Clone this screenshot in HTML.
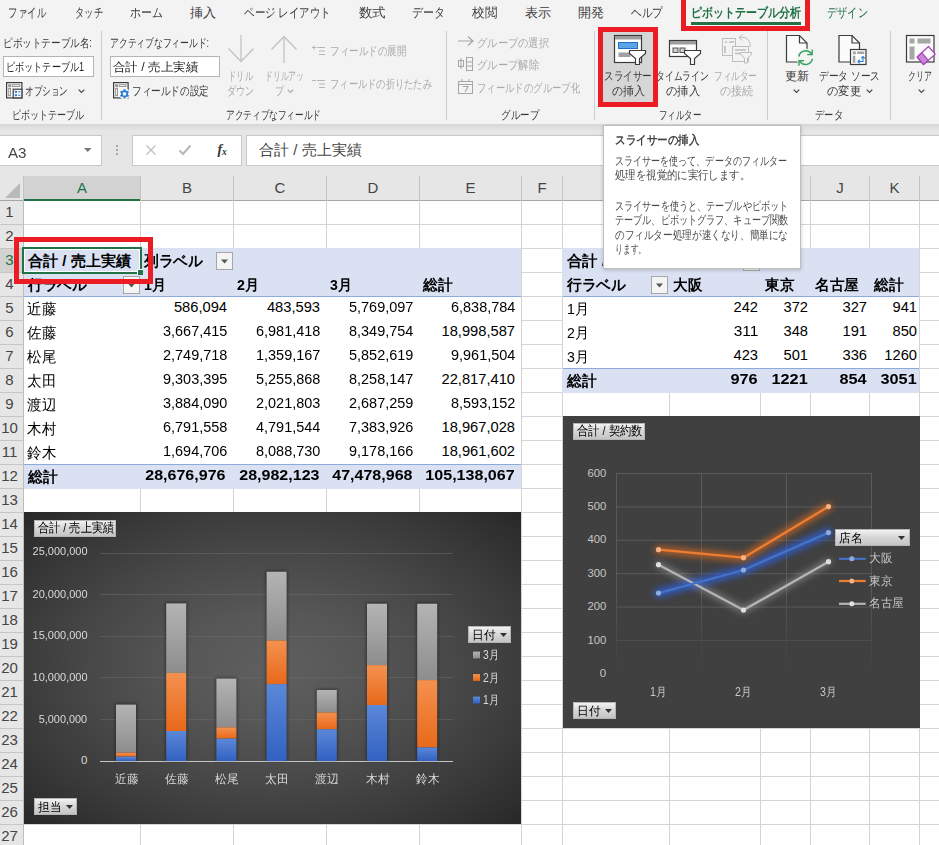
<!DOCTYPE html>
<html lang="ja"><head><meta charset="utf-8"><title>Excel</title>
<style>
html,body{margin:0;padding:0}
body{width:939px;height:845px;overflow:hidden;position:relative;background:#fff;font-family:"Liberation Sans",sans-serif;}
span,div,svg{box-sizing:border-box}
</style></head><body>
<div style="position:absolute;left:0px;top:176px;width:939px;height:669px;background:#fff;"></div>
<svg style="position:absolute;left:0px;top:0px;" width="939" height="845" viewBox="0 0 939 845"><rect x="140" y="200" width="1" height="645" fill="#d4d4d4"/><rect x="233" y="200" width="1" height="645" fill="#d4d4d4"/><rect x="326" y="200" width="1" height="645" fill="#d4d4d4"/><rect x="419" y="200" width="1" height="645" fill="#d4d4d4"/><rect x="521" y="200" width="1" height="645" fill="#d4d4d4"/><rect x="562" y="200" width="1" height="645" fill="#d4d4d4"/><rect x="669" y="200" width="1" height="645" fill="#d4d4d4"/><rect x="760" y="200" width="1" height="645" fill="#d4d4d4"/><rect x="810" y="200" width="1" height="645" fill="#d4d4d4"/><rect x="869" y="200" width="1" height="645" fill="#d4d4d4"/><rect x="919" y="200" width="1" height="645" fill="#d4d4d4"/><rect x="23" y="224" width="916" height="1" fill="#d4d4d4"/><rect x="23" y="248" width="916" height="1" fill="#d4d4d4"/><rect x="23" y="272" width="916" height="1" fill="#d4d4d4"/><rect x="23" y="296" width="916" height="1" fill="#d4d4d4"/><rect x="23" y="320" width="916" height="1" fill="#d4d4d4"/><rect x="23" y="344" width="916" height="1" fill="#d4d4d4"/><rect x="23" y="368" width="916" height="1" fill="#d4d4d4"/><rect x="23" y="392" width="916" height="1" fill="#d4d4d4"/><rect x="23" y="416" width="916" height="1" fill="#d4d4d4"/><rect x="23" y="440" width="916" height="1" fill="#d4d4d4"/><rect x="23" y="464" width="916" height="1" fill="#d4d4d4"/><rect x="23" y="488" width="916" height="1" fill="#d4d4d4"/><rect x="23" y="512" width="916" height="1" fill="#d4d4d4"/><rect x="23" y="536" width="916" height="1" fill="#d4d4d4"/><rect x="23" y="560" width="916" height="1" fill="#d4d4d4"/><rect x="23" y="584" width="916" height="1" fill="#d4d4d4"/><rect x="23" y="608" width="916" height="1" fill="#d4d4d4"/><rect x="23" y="632" width="916" height="1" fill="#d4d4d4"/><rect x="23" y="656" width="916" height="1" fill="#d4d4d4"/><rect x="23" y="680" width="916" height="1" fill="#d4d4d4"/><rect x="23" y="704" width="916" height="1" fill="#d4d4d4"/><rect x="23" y="728" width="916" height="1" fill="#d4d4d4"/><rect x="23" y="752" width="916" height="1" fill="#d4d4d4"/><rect x="23" y="776" width="916" height="1" fill="#d4d4d4"/><rect x="23" y="800" width="916" height="1" fill="#d4d4d4"/><rect x="23" y="824" width="916" height="1" fill="#d4d4d4"/><rect x="23" y="848" width="916" height="1" fill="#d4d4d4"/></svg>
<div style="position:absolute;left:24px;top:248px;width:497px;height:48px;background:#d9e1f2;"></div>
<div style="position:absolute;left:24px;top:296px;width:497px;height:1px;background:#8ea9db;"></div>
<div style="position:absolute;left:24px;top:464px;width:497px;height:25px;background:#d9e1f2;"></div>
<div style="position:absolute;left:24px;top:464px;width:497px;height:1px;background:#8ea9db;"></div>
<div style="position:absolute;left:24px;top:297px;width:497px;height:167px;background:#fff;"></div>
<div style="position:absolute;left:563px;top:297px;width:356px;height:71px;background:#fff;"></div>
<div style="position:absolute;left:562px;top:248px;width:357px;height:48px;background:#d9e1f2;"></div>
<div style="position:absolute;left:563px;top:296px;width:356px;height:1px;background:#8ea9db;"></div>
<div style="position:absolute;left:562px;top:368px;width:357px;height:25px;background:#d9e1f2;"></div>
<div style="position:absolute;left:563px;top:368px;width:356px;height:1px;background:#8ea9db;"></div>
<div style="position:absolute;left:0px;top:176px;width:939px;height:25px;background:#e6e6e6;"></div>
<div style="position:absolute;left:0px;top:200px;width:939px;height:1px;background:#a6a6a6;"></div>
<div style="position:absolute;left:23px;top:176px;width:117px;height:25px;background:#d2d2d2;"></div>
<div style="position:absolute;left:23px;top:199px;width:118px;height:2px;background:#217346;"></div>
<div style="position:absolute;left:23px;top:176px;width:1px;height:25px;background:#c3c3c3;"></div>
<span id="t1" style="position:absolute;white-space:nowrap;line-height:19px;height:19px;font-size:15px;color:#217346;top:177.5px;left:72.0px;transform-origin:0 50%;width:20px;text-align:center;">A</span>
<div style="position:absolute;left:140px;top:176px;width:1px;height:25px;background:#c3c3c3;"></div>
<span id="t2" style="position:absolute;white-space:nowrap;line-height:19px;height:19px;font-size:15px;color:#444;top:177.5px;left:177.0px;transform-origin:0 50%;width:20px;text-align:center;">B</span>
<div style="position:absolute;left:233px;top:176px;width:1px;height:25px;background:#c3c3c3;"></div>
<span id="t3" style="position:absolute;white-space:nowrap;line-height:19px;height:19px;font-size:15px;color:#444;top:177.5px;left:270.0px;transform-origin:0 50%;width:20px;text-align:center;">C</span>
<div style="position:absolute;left:326px;top:176px;width:1px;height:25px;background:#c3c3c3;"></div>
<span id="t4" style="position:absolute;white-space:nowrap;line-height:19px;height:19px;font-size:15px;color:#444;top:177.5px;left:363.0px;transform-origin:0 50%;width:20px;text-align:center;">D</span>
<div style="position:absolute;left:419px;top:176px;width:1px;height:25px;background:#c3c3c3;"></div>
<span id="t5" style="position:absolute;white-space:nowrap;line-height:19px;height:19px;font-size:15px;color:#444;top:177.5px;left:460.5px;transform-origin:0 50%;width:20px;text-align:center;">E</span>
<div style="position:absolute;left:521px;top:176px;width:1px;height:25px;background:#c3c3c3;"></div>
<span id="t6" style="position:absolute;white-space:nowrap;line-height:19px;height:19px;font-size:15px;color:#444;top:177.5px;left:532.0px;transform-origin:0 50%;width:20px;text-align:center;">F</span>
<div style="position:absolute;left:562px;top:176px;width:1px;height:25px;background:#c3c3c3;"></div>
<span id="t7" style="position:absolute;white-space:nowrap;line-height:19px;height:19px;font-size:15px;color:#444;top:177.5px;left:606.0px;transform-origin:0 50%;width:20px;text-align:center;">G</span>
<div style="position:absolute;left:669px;top:176px;width:1px;height:25px;background:#c3c3c3;"></div>
<span id="t8" style="position:absolute;white-space:nowrap;line-height:19px;height:19px;font-size:15px;color:#444;top:177.5px;left:705.0px;transform-origin:0 50%;width:20px;text-align:center;">H</span>
<div style="position:absolute;left:760px;top:176px;width:1px;height:25px;background:#c3c3c3;"></div>
<span id="t9" style="position:absolute;white-space:nowrap;line-height:19px;height:19px;font-size:15px;color:#444;top:177.5px;left:775.5px;transform-origin:0 50%;width:20px;text-align:center;">I</span>
<div style="position:absolute;left:810px;top:176px;width:1px;height:25px;background:#c3c3c3;"></div>
<span id="t10" style="position:absolute;white-space:nowrap;line-height:19px;height:19px;font-size:15px;color:#444;top:177.5px;left:830.0px;transform-origin:0 50%;width:20px;text-align:center;">J</span>
<div style="position:absolute;left:869px;top:176px;width:1px;height:25px;background:#c3c3c3;"></div>
<span id="t11" style="position:absolute;white-space:nowrap;line-height:19px;height:19px;font-size:15px;color:#444;top:177.5px;left:884.5px;transform-origin:0 50%;width:20px;text-align:center;">K</span>
<div style="position:absolute;left:919px;top:176px;width:1px;height:25px;background:#c3c3c3;"></div>
<svg style="position:absolute;left:4px;top:183px;" width="17" height="16" viewBox="0 0 17 16"><path d="M16 0 V15 H1 Z" fill="#b9b9b9"/></svg>
<div style="position:absolute;left:0px;top:201px;width:23px;height:644px;background:#e6e6e6;"></div>
<div style="position:absolute;left:23px;top:201px;width:1px;height:644px;background:#bdbdbd;"></div>
<div style="position:absolute;left:0px;top:248px;width:23px;height:24px;background:#d2d2d2;"></div>
<div style="position:absolute;left:22px;top:248px;width:2px;height:25px;background:#217346;"></div>
<div style="position:absolute;left:0px;top:224px;width:23px;height:1px;background:#c6c6c6;"></div>
<span id="t12" style="position:absolute;white-space:nowrap;line-height:19px;height:19px;font-size:15px;color:#444;top:202.0px;left:0px;transform-origin:0 50%;width:19px;text-align:center;">1</span>
<div style="position:absolute;left:0px;top:248px;width:23px;height:1px;background:#c6c6c6;"></div>
<span id="t13" style="position:absolute;white-space:nowrap;line-height:19px;height:19px;font-size:15px;color:#444;top:226.0px;left:0px;transform-origin:0 50%;width:19px;text-align:center;">2</span>
<div style="position:absolute;left:0px;top:272px;width:23px;height:1px;background:#c6c6c6;"></div>
<span id="t14" style="position:absolute;white-space:nowrap;line-height:19px;height:19px;font-size:15px;color:#217346;top:250.0px;left:0px;transform-origin:0 50%;width:19px;text-align:center;">3</span>
<div style="position:absolute;left:0px;top:296px;width:23px;height:1px;background:#c6c6c6;"></div>
<span id="t15" style="position:absolute;white-space:nowrap;line-height:19px;height:19px;font-size:15px;color:#444;top:274.0px;left:0px;transform-origin:0 50%;width:19px;text-align:center;">4</span>
<div style="position:absolute;left:0px;top:320px;width:23px;height:1px;background:#c6c6c6;"></div>
<span id="t16" style="position:absolute;white-space:nowrap;line-height:19px;height:19px;font-size:15px;color:#444;top:298.0px;left:0px;transform-origin:0 50%;width:19px;text-align:center;">5</span>
<div style="position:absolute;left:0px;top:344px;width:23px;height:1px;background:#c6c6c6;"></div>
<span id="t17" style="position:absolute;white-space:nowrap;line-height:19px;height:19px;font-size:15px;color:#444;top:322.0px;left:0px;transform-origin:0 50%;width:19px;text-align:center;">6</span>
<div style="position:absolute;left:0px;top:368px;width:23px;height:1px;background:#c6c6c6;"></div>
<span id="t18" style="position:absolute;white-space:nowrap;line-height:19px;height:19px;font-size:15px;color:#444;top:346.0px;left:0px;transform-origin:0 50%;width:19px;text-align:center;">7</span>
<div style="position:absolute;left:0px;top:392px;width:23px;height:1px;background:#c6c6c6;"></div>
<span id="t19" style="position:absolute;white-space:nowrap;line-height:19px;height:19px;font-size:15px;color:#444;top:370.0px;left:0px;transform-origin:0 50%;width:19px;text-align:center;">8</span>
<div style="position:absolute;left:0px;top:416px;width:23px;height:1px;background:#c6c6c6;"></div>
<span id="t20" style="position:absolute;white-space:nowrap;line-height:19px;height:19px;font-size:15px;color:#444;top:394.0px;left:0px;transform-origin:0 50%;width:19px;text-align:center;">9</span>
<div style="position:absolute;left:0px;top:440px;width:23px;height:1px;background:#c6c6c6;"></div>
<span id="t21" style="position:absolute;white-space:nowrap;line-height:19px;height:19px;font-size:15px;color:#444;top:418.0px;left:0px;transform-origin:0 50%;width:19px;text-align:center;">10</span>
<div style="position:absolute;left:0px;top:464px;width:23px;height:1px;background:#c6c6c6;"></div>
<span id="t22" style="position:absolute;white-space:nowrap;line-height:19px;height:19px;font-size:15px;color:#444;top:442.0px;left:0px;transform-origin:0 50%;width:19px;text-align:center;">11</span>
<div style="position:absolute;left:0px;top:488px;width:23px;height:1px;background:#c6c6c6;"></div>
<span id="t23" style="position:absolute;white-space:nowrap;line-height:19px;height:19px;font-size:15px;color:#444;top:466.0px;left:0px;transform-origin:0 50%;width:19px;text-align:center;">12</span>
<div style="position:absolute;left:0px;top:512px;width:23px;height:1px;background:#c6c6c6;"></div>
<span id="t24" style="position:absolute;white-space:nowrap;line-height:19px;height:19px;font-size:15px;color:#444;top:490.0px;left:0px;transform-origin:0 50%;width:19px;text-align:center;">13</span>
<div style="position:absolute;left:0px;top:536px;width:23px;height:1px;background:#c6c6c6;"></div>
<span id="t25" style="position:absolute;white-space:nowrap;line-height:19px;height:19px;font-size:15px;color:#444;top:514.0px;left:0px;transform-origin:0 50%;width:19px;text-align:center;">14</span>
<div style="position:absolute;left:0px;top:560px;width:23px;height:1px;background:#c6c6c6;"></div>
<span id="t26" style="position:absolute;white-space:nowrap;line-height:19px;height:19px;font-size:15px;color:#444;top:538.0px;left:0px;transform-origin:0 50%;width:19px;text-align:center;">15</span>
<div style="position:absolute;left:0px;top:584px;width:23px;height:1px;background:#c6c6c6;"></div>
<span id="t27" style="position:absolute;white-space:nowrap;line-height:19px;height:19px;font-size:15px;color:#444;top:562.0px;left:0px;transform-origin:0 50%;width:19px;text-align:center;">16</span>
<div style="position:absolute;left:0px;top:608px;width:23px;height:1px;background:#c6c6c6;"></div>
<span id="t28" style="position:absolute;white-space:nowrap;line-height:19px;height:19px;font-size:15px;color:#444;top:586.0px;left:0px;transform-origin:0 50%;width:19px;text-align:center;">17</span>
<div style="position:absolute;left:0px;top:632px;width:23px;height:1px;background:#c6c6c6;"></div>
<span id="t29" style="position:absolute;white-space:nowrap;line-height:19px;height:19px;font-size:15px;color:#444;top:610.0px;left:0px;transform-origin:0 50%;width:19px;text-align:center;">18</span>
<div style="position:absolute;left:0px;top:656px;width:23px;height:1px;background:#c6c6c6;"></div>
<span id="t30" style="position:absolute;white-space:nowrap;line-height:19px;height:19px;font-size:15px;color:#444;top:634.0px;left:0px;transform-origin:0 50%;width:19px;text-align:center;">19</span>
<div style="position:absolute;left:0px;top:680px;width:23px;height:1px;background:#c6c6c6;"></div>
<span id="t31" style="position:absolute;white-space:nowrap;line-height:19px;height:19px;font-size:15px;color:#444;top:658.0px;left:0px;transform-origin:0 50%;width:19px;text-align:center;">20</span>
<div style="position:absolute;left:0px;top:704px;width:23px;height:1px;background:#c6c6c6;"></div>
<span id="t32" style="position:absolute;white-space:nowrap;line-height:19px;height:19px;font-size:15px;color:#444;top:682.0px;left:0px;transform-origin:0 50%;width:19px;text-align:center;">21</span>
<div style="position:absolute;left:0px;top:728px;width:23px;height:1px;background:#c6c6c6;"></div>
<span id="t33" style="position:absolute;white-space:nowrap;line-height:19px;height:19px;font-size:15px;color:#444;top:706.0px;left:0px;transform-origin:0 50%;width:19px;text-align:center;">22</span>
<div style="position:absolute;left:0px;top:752px;width:23px;height:1px;background:#c6c6c6;"></div>
<span id="t34" style="position:absolute;white-space:nowrap;line-height:19px;height:19px;font-size:15px;color:#444;top:730.0px;left:0px;transform-origin:0 50%;width:19px;text-align:center;">23</span>
<div style="position:absolute;left:0px;top:776px;width:23px;height:1px;background:#c6c6c6;"></div>
<span id="t35" style="position:absolute;white-space:nowrap;line-height:19px;height:19px;font-size:15px;color:#444;top:754.0px;left:0px;transform-origin:0 50%;width:19px;text-align:center;">24</span>
<div style="position:absolute;left:0px;top:800px;width:23px;height:1px;background:#c6c6c6;"></div>
<span id="t36" style="position:absolute;white-space:nowrap;line-height:19px;height:19px;font-size:15px;color:#444;top:778.0px;left:0px;transform-origin:0 50%;width:19px;text-align:center;">25</span>
<div style="position:absolute;left:0px;top:824px;width:23px;height:1px;background:#c6c6c6;"></div>
<span id="t37" style="position:absolute;white-space:nowrap;line-height:19px;height:19px;font-size:15px;color:#444;top:802.0px;left:0px;transform-origin:0 50%;width:19px;text-align:center;">26</span>
<div style="position:absolute;left:0px;top:848px;width:23px;height:1px;background:#c6c6c6;"></div>
<span id="t38" style="position:absolute;white-space:nowrap;line-height:19px;height:19px;font-size:15px;color:#444;top:826.0px;left:0px;transform-origin:0 50%;width:19px;text-align:center;">27</span>
<svg style="position:absolute;left:743px;top:253px;" width="17" height="18" viewBox="0 0 17 18"><rect x="0.5" y="0.5" width="16" height="17" fill="#f4f4f4" stroke="#a6a6a6"/><path d="M5 7.5 H12 L8.5 11.5 Z" fill="#555"/></svg>
<span id="t39" class="m" style="position:absolute;white-space:nowrap;line-height:19px;height:19px;font-size:15px;color:#000;top:250.5px;font-weight:bold;left:28px;transform-origin:0 50%;">合計 / 売上実績</span>
<span id="t40" class="m" style="position:absolute;white-space:nowrap;line-height:19px;height:19px;font-size:15px;color:#000;top:250.5px;font-weight:bold;left:144px;transform-origin:0 50%;transform:scaleX(0.983);">列ラベル</span>
<svg style="position:absolute;left:216px;top:252px;" width="17" height="18" viewBox="0 0 17 18"><rect x="0.5" y="0.5" width="16" height="17" fill="#f4f4f4" stroke="#a6a6a6"/><path d="M5 7.5 H12 L8.5 11.5 Z" fill="#555"/></svg>
<span id="t41" class="m" style="position:absolute;white-space:nowrap;line-height:19px;height:19px;font-size:15px;color:#000;top:274.5px;font-weight:bold;left:28px;transform-origin:0 50%;transform:scaleX(0.983);">行ラベル</span>
<svg style="position:absolute;left:123px;top:276px;" width="17" height="18" viewBox="0 0 17 18"><rect x="0.5" y="0.5" width="16" height="17" fill="#f4f4f4" stroke="#a6a6a6"/><path d="M5 7.5 H12 L8.5 11.5 Z" fill="#555"/></svg>
<span id="t42" class="m" style="position:absolute;white-space:nowrap;line-height:19px;height:19px;font-size:15px;color:#000;top:274.5px;font-weight:bold;left:144px;transform-origin:0 50%;transform:scaleX(0.942);">1月</span>
<span id="t43" class="m" style="position:absolute;white-space:nowrap;line-height:19px;height:19px;font-size:15px;color:#000;top:274.5px;font-weight:bold;left:237px;transform-origin:0 50%;transform:scaleX(0.942);">2月</span>
<span id="t44" class="m" style="position:absolute;white-space:nowrap;line-height:19px;height:19px;font-size:15px;color:#000;top:274.5px;font-weight:bold;left:330px;transform-origin:0 50%;transform:scaleX(0.942);">3月</span>
<span id="t45" class="m" style="position:absolute;white-space:nowrap;line-height:19px;height:19px;font-size:15px;color:#000;top:274.5px;font-weight:bold;left:423px;transform-origin:0 50%;transform:scaleX(0.983);">総計</span>
<span id="t46" class="m" style="position:absolute;white-space:nowrap;line-height:19px;height:19px;font-size:15px;color:#000;top:298.5px;left:27px;transform-origin:0 50%;transform:scaleX(0.967);">近藤</span>
<span id="t47" class="m" style="position:absolute;white-space:nowrap;line-height:18px;height:18px;font-size:14.7px;color:#000;top:297.6px;right:712px;transform-origin:100% 50%;">586,094</span>
<span id="t48" class="m" style="position:absolute;white-space:nowrap;line-height:18px;height:18px;font-size:14.7px;color:#000;top:297.6px;right:619px;transform-origin:100% 50%;">483,593</span>
<span id="t49" class="m" style="position:absolute;white-space:nowrap;line-height:18px;height:18px;font-size:14.7px;color:#000;top:297.6px;right:526px;transform-origin:100% 50%;transform:scaleX(0.985);">5,769,097</span>
<span id="t50" class="m" style="position:absolute;white-space:nowrap;line-height:18px;height:18px;font-size:14.7px;color:#000;top:297.6px;right:424px;transform-origin:100% 50%;transform:scaleX(0.985);">6,838,784</span>
<span id="t51" class="m" style="position:absolute;white-space:nowrap;line-height:19px;height:19px;font-size:15px;color:#000;top:322.5px;left:27px;transform-origin:0 50%;transform:scaleX(0.967);">佐藤</span>
<span id="t52" class="m" style="position:absolute;white-space:nowrap;line-height:18px;height:18px;font-size:14.7px;color:#000;top:321.6px;right:712px;transform-origin:100% 50%;transform:scaleX(0.985);">3,667,415</span>
<span id="t53" class="m" style="position:absolute;white-space:nowrap;line-height:18px;height:18px;font-size:14.7px;color:#000;top:321.6px;right:619px;transform-origin:100% 50%;transform:scaleX(0.985);">6,981,418</span>
<span id="t54" class="m" style="position:absolute;white-space:nowrap;line-height:18px;height:18px;font-size:14.7px;color:#000;top:321.6px;right:526px;transform-origin:100% 50%;transform:scaleX(0.985);">8,349,754</span>
<span id="t55" class="m" style="position:absolute;white-space:nowrap;line-height:18px;height:18px;font-size:14.7px;color:#000;top:321.6px;right:424px;transform-origin:100% 50%;">18,998,587</span>
<span id="t56" class="m" style="position:absolute;white-space:nowrap;line-height:19px;height:19px;font-size:15px;color:#000;top:346.5px;left:27px;transform-origin:0 50%;transform:scaleX(0.967);">松尾</span>
<span id="t57" class="m" style="position:absolute;white-space:nowrap;line-height:18px;height:18px;font-size:14.7px;color:#000;top:345.6px;right:712px;transform-origin:100% 50%;transform:scaleX(0.985);">2,749,718</span>
<span id="t58" class="m" style="position:absolute;white-space:nowrap;line-height:18px;height:18px;font-size:14.7px;color:#000;top:345.6px;right:619px;transform-origin:100% 50%;transform:scaleX(0.985);">1,359,167</span>
<span id="t59" class="m" style="position:absolute;white-space:nowrap;line-height:18px;height:18px;font-size:14.7px;color:#000;top:345.6px;right:526px;transform-origin:100% 50%;transform:scaleX(0.985);">5,852,619</span>
<span id="t60" class="m" style="position:absolute;white-space:nowrap;line-height:18px;height:18px;font-size:14.7px;color:#000;top:345.6px;right:424px;transform-origin:100% 50%;transform:scaleX(0.985);">9,961,504</span>
<span id="t61" class="m" style="position:absolute;white-space:nowrap;line-height:19px;height:19px;font-size:15px;color:#000;top:370.5px;left:27px;transform-origin:0 50%;transform:scaleX(0.967);">太田</span>
<span id="t62" class="m" style="position:absolute;white-space:nowrap;line-height:18px;height:18px;font-size:14.7px;color:#000;top:369.6px;right:712px;transform-origin:100% 50%;transform:scaleX(0.985);">9,303,395</span>
<span id="t63" class="m" style="position:absolute;white-space:nowrap;line-height:18px;height:18px;font-size:14.7px;color:#000;top:369.6px;right:619px;transform-origin:100% 50%;transform:scaleX(0.985);">5,255,868</span>
<span id="t64" class="m" style="position:absolute;white-space:nowrap;line-height:18px;height:18px;font-size:14.7px;color:#000;top:369.6px;right:526px;transform-origin:100% 50%;transform:scaleX(0.985);">8,258,147</span>
<span id="t65" class="m" style="position:absolute;white-space:nowrap;line-height:18px;height:18px;font-size:14.7px;color:#000;top:369.6px;right:424px;transform-origin:100% 50%;">22,817,410</span>
<span id="t66" class="m" style="position:absolute;white-space:nowrap;line-height:19px;height:19px;font-size:15px;color:#000;top:394.5px;left:27px;transform-origin:0 50%;transform:scaleX(0.967);">渡辺</span>
<span id="t67" class="m" style="position:absolute;white-space:nowrap;line-height:18px;height:18px;font-size:14.7px;color:#000;top:393.6px;right:712px;transform-origin:100% 50%;transform:scaleX(0.985);">3,884,090</span>
<span id="t68" class="m" style="position:absolute;white-space:nowrap;line-height:18px;height:18px;font-size:14.7px;color:#000;top:393.6px;right:619px;transform-origin:100% 50%;transform:scaleX(0.985);">2,021,803</span>
<span id="t69" class="m" style="position:absolute;white-space:nowrap;line-height:18px;height:18px;font-size:14.7px;color:#000;top:393.6px;right:526px;transform-origin:100% 50%;transform:scaleX(0.985);">2,687,259</span>
<span id="t70" class="m" style="position:absolute;white-space:nowrap;line-height:18px;height:18px;font-size:14.7px;color:#000;top:393.6px;right:424px;transform-origin:100% 50%;transform:scaleX(0.985);">8,593,152</span>
<span id="t71" class="m" style="position:absolute;white-space:nowrap;line-height:19px;height:19px;font-size:15px;color:#000;top:418.5px;left:27px;transform-origin:0 50%;transform:scaleX(0.967);">木村</span>
<span id="t72" class="m" style="position:absolute;white-space:nowrap;line-height:18px;height:18px;font-size:14.7px;color:#000;top:417.6px;right:712px;transform-origin:100% 50%;transform:scaleX(0.985);">6,791,558</span>
<span id="t73" class="m" style="position:absolute;white-space:nowrap;line-height:18px;height:18px;font-size:14.7px;color:#000;top:417.6px;right:619px;transform-origin:100% 50%;transform:scaleX(0.985);">4,791,544</span>
<span id="t74" class="m" style="position:absolute;white-space:nowrap;line-height:18px;height:18px;font-size:14.7px;color:#000;top:417.6px;right:526px;transform-origin:100% 50%;transform:scaleX(0.985);">7,383,926</span>
<span id="t75" class="m" style="position:absolute;white-space:nowrap;line-height:18px;height:18px;font-size:14.7px;color:#000;top:417.6px;right:424px;transform-origin:100% 50%;">18,967,028</span>
<span id="t76" class="m" style="position:absolute;white-space:nowrap;line-height:19px;height:19px;font-size:15px;color:#000;top:442.5px;left:27px;transform-origin:0 50%;transform:scaleX(0.967);">鈴木</span>
<span id="t77" class="m" style="position:absolute;white-space:nowrap;line-height:18px;height:18px;font-size:14.7px;color:#000;top:441.6px;right:712px;transform-origin:100% 50%;transform:scaleX(0.985);">1,694,706</span>
<span id="t78" class="m" style="position:absolute;white-space:nowrap;line-height:18px;height:18px;font-size:14.7px;color:#000;top:441.6px;right:619px;transform-origin:100% 50%;transform:scaleX(0.985);">8,088,730</span>
<span id="t79" class="m" style="position:absolute;white-space:nowrap;line-height:18px;height:18px;font-size:14.7px;color:#000;top:441.6px;right:526px;transform-origin:100% 50%;transform:scaleX(0.985);">9,178,166</span>
<span id="t80" class="m" style="position:absolute;white-space:nowrap;line-height:18px;height:18px;font-size:14.7px;color:#000;top:441.6px;right:424px;transform-origin:100% 50%;">18,961,602</span>
<span id="t81" class="m" style="position:absolute;white-space:nowrap;line-height:19px;height:19px;font-size:15px;color:#000;top:466.5px;font-weight:bold;left:28px;transform-origin:0 50%;transform:scaleX(0.983);">総計</span>
<span id="t82" class="m" style="position:absolute;white-space:nowrap;line-height:18px;height:18px;font-size:14.7px;color:#000;top:465.6px;font-weight:bold;right:713px;transform-origin:100% 50%;transform:scaleX(1.092);">28,676,976</span>
<span id="t83" class="m" style="position:absolute;white-space:nowrap;line-height:18px;height:18px;font-size:14.7px;color:#000;top:465.6px;font-weight:bold;right:619px;transform-origin:100% 50%;transform:scaleX(1.092);">28,982,123</span>
<span id="t84" class="m" style="position:absolute;white-space:nowrap;line-height:18px;height:18px;font-size:14.7px;color:#000;top:465.6px;font-weight:bold;right:526px;transform-origin:100% 50%;transform:scaleX(1.092);">47,478,968</span>
<span id="t85" class="m" style="position:absolute;white-space:nowrap;line-height:18px;height:18px;font-size:14.7px;color:#000;top:465.6px;font-weight:bold;right:424px;transform-origin:100% 50%;transform:scaleX(1.094);">105,138,067</span>
<span id="t86" class="m" style="position:absolute;white-space:nowrap;line-height:19px;height:19px;font-size:15px;color:#000;top:250.5px;font-weight:bold;left:566.5px;transform-origin:0 50%;transform:scaleX(1.023);">合計 / 契約数</span>
<span id="t87" class="m" style="position:absolute;white-space:nowrap;line-height:19px;height:19px;font-size:15px;color:#000;top:274.5px;font-weight:bold;left:567px;transform-origin:0 50%;transform:scaleX(0.983);">行ラベル</span>
<svg style="position:absolute;left:651px;top:276px;" width="17" height="18" viewBox="0 0 17 18"><rect x="0.5" y="0.5" width="16" height="17" fill="#f4f4f4" stroke="#a6a6a6"/><path d="M5 7.5 H12 L8.5 11.5 Z" fill="#555"/></svg>
<span id="t88" class="m" style="position:absolute;white-space:nowrap;line-height:19px;height:19px;font-size:15px;color:#000;top:274.5px;font-weight:bold;left:673px;transform-origin:0 50%;transform:scaleX(0.967);">大阪</span>
<span id="t89" class="m" style="position:absolute;white-space:nowrap;line-height:19px;height:19px;font-size:15px;color:#000;top:274.5px;font-weight:bold;left:765px;transform-origin:0 50%;transform:scaleX(0.967);">東京</span>
<span id="t90" class="m" style="position:absolute;white-space:nowrap;line-height:19px;height:19px;font-size:15px;color:#000;top:274.5px;font-weight:bold;left:815px;transform-origin:0 50%;transform:scaleX(0.978);">名古屋</span>
<span id="t91" class="m" style="position:absolute;white-space:nowrap;line-height:19px;height:19px;font-size:15px;color:#000;top:274.5px;font-weight:bold;left:874px;transform-origin:0 50%;transform:scaleX(0.983);">総計</span>
<span id="t92" class="m" style="position:absolute;white-space:nowrap;line-height:19px;height:19px;font-size:15px;color:#000;top:298.5px;left:567px;transform-origin:0 50%;transform:scaleX(0.942);">1月</span>
<span id="t93" class="m" style="position:absolute;white-space:nowrap;line-height:18px;height:18px;font-size:14.7px;color:#000;top:297.6px;right:181px;transform-origin:100% 50%;">242</span>
<span id="t94" class="m" style="position:absolute;white-space:nowrap;line-height:18px;height:18px;font-size:14.7px;color:#000;top:297.6px;right:131px;transform-origin:100% 50%;">372</span>
<span id="t95" class="m" style="position:absolute;white-space:nowrap;line-height:18px;height:18px;font-size:14.7px;color:#000;top:297.6px;right:72px;transform-origin:100% 50%;">327</span>
<span id="t96" class="m" style="position:absolute;white-space:nowrap;line-height:18px;height:18px;font-size:14.7px;color:#000;top:297.6px;right:22px;transform-origin:100% 50%;">941</span>
<span id="t97" class="m" style="position:absolute;white-space:nowrap;line-height:19px;height:19px;font-size:15px;color:#000;top:322.5px;left:567px;transform-origin:0 50%;transform:scaleX(0.942);">2月</span>
<span id="t98" class="m" style="position:absolute;white-space:nowrap;line-height:18px;height:18px;font-size:14.7px;color:#000;top:321.6px;right:181px;transform-origin:100% 50%;transform:scaleX(1.057);">311</span>
<span id="t99" class="m" style="position:absolute;white-space:nowrap;line-height:18px;height:18px;font-size:14.7px;color:#000;top:321.6px;right:131px;transform-origin:100% 50%;">348</span>
<span id="t100" class="m" style="position:absolute;white-space:nowrap;line-height:18px;height:18px;font-size:14.7px;color:#000;top:321.6px;right:72px;transform-origin:100% 50%;">191</span>
<span id="t101" class="m" style="position:absolute;white-space:nowrap;line-height:18px;height:18px;font-size:14.7px;color:#000;top:321.6px;right:22px;transform-origin:100% 50%;">850</span>
<span id="t102" class="m" style="position:absolute;white-space:nowrap;line-height:19px;height:19px;font-size:15px;color:#000;top:346.5px;left:567px;transform-origin:0 50%;transform:scaleX(0.942);">3月</span>
<span id="t103" class="m" style="position:absolute;white-space:nowrap;line-height:18px;height:18px;font-size:14.7px;color:#000;top:345.6px;right:181px;transform-origin:100% 50%;">423</span>
<span id="t104" class="m" style="position:absolute;white-space:nowrap;line-height:18px;height:18px;font-size:14.7px;color:#000;top:345.6px;right:131px;transform-origin:100% 50%;">501</span>
<span id="t105" class="m" style="position:absolute;white-space:nowrap;line-height:18px;height:18px;font-size:14.7px;color:#000;top:345.6px;right:72px;transform-origin:100% 50%;">336</span>
<span id="t106" class="m" style="position:absolute;white-space:nowrap;line-height:18px;height:18px;font-size:14.7px;color:#000;top:345.6px;right:22px;transform-origin:100% 50%;">1260</span>
<span id="t107" class="m" style="position:absolute;white-space:nowrap;line-height:19px;height:19px;font-size:15px;color:#000;top:370.5px;font-weight:bold;left:567px;transform-origin:0 50%;transform:scaleX(0.983);">総計</span>
<span id="t108" class="m" style="position:absolute;white-space:nowrap;line-height:18px;height:18px;font-size:14.7px;color:#000;top:369.6px;font-weight:bold;right:181px;transform-origin:100% 50%;transform:scaleX(1.107);">976</span>
<span id="t109" class="m" style="position:absolute;white-space:nowrap;line-height:18px;height:18px;font-size:14.7px;color:#000;top:369.6px;font-weight:bold;right:131px;transform-origin:100% 50%;transform:scaleX(1.107);">1221</span>
<span id="t110" class="m" style="position:absolute;white-space:nowrap;line-height:18px;height:18px;font-size:14.7px;color:#000;top:369.6px;font-weight:bold;right:72px;transform-origin:100% 50%;transform:scaleX(1.107);">854</span>
<span id="t111" class="m" style="position:absolute;white-space:nowrap;line-height:18px;height:18px;font-size:14.7px;color:#000;top:369.6px;font-weight:bold;right:22px;transform-origin:100% 50%;transform:scaleX(1.107);">3051</span>
<div style="position:absolute;left:24px;top:249px;width:116px;height:23px;border:1px solid #fff;"></div>
<div style="position:absolute;left:22px;top:247px;width:120px;height:27px;border:2px solid #217346;"></div>
<div style="position:absolute;left:137px;top:269px;width:6px;height:6px;background:#217346;border:1px solid #fff;border-right:none;border-bottom:none;"></div>
<div style="position:absolute;left:24px;top:512px;width:497px;height:312px;background:radial-gradient(ellipse farthest-corner at 50% 50%,#5f5f5f 0%,#575757 25%,#484848 52%,#3a3a3a 74%,#282828 100%);"></div>
<svg style="position:absolute;left:0px;top:0px;" width="939" height="845" viewBox="0 0 939 845"><rect x="100" y="719" width="353" height="1" fill="#6a6a6a" opacity="0.55"/><rect x="100" y="677" width="353" height="1" fill="#6a6a6a" opacity="0.55"/><rect x="100" y="636" width="353" height="1" fill="#6a6a6a" opacity="0.55"/><rect x="100" y="594" width="353" height="1" fill="#6a6a6a" opacity="0.55"/><rect x="100" y="553" width="353" height="1" fill="#6a6a6a" opacity="0.55"/><rect x="100" y="761" width="353" height="1" fill="#c4c4c4"/><defs>
<linearGradient id="gb" x1="0" y1="0" x2="0" y2="1"><stop offset="0" stop-color="#5c88d8"/><stop offset="1" stop-color="#3161c2"/></linearGradient>
<linearGradient id="go" x1="0" y1="0" x2="0" y2="1"><stop offset="0" stop-color="#f4914f"/><stop offset="1" stop-color="#e8691a"/></linearGradient>
<linearGradient id="gg" x1="0" y1="0" x2="0" y2="1"><stop offset="0" stop-color="#b4b4b4"/><stop offset="1" stop-color="#8d8d8d"/></linearGradient>
</defs><filter id="bs" x="-50%" y="-10%" width="200%" height="120%"><feGaussianBlur stdDeviation="1.6"/></filter><rect x="115.0" y="703.6" width="22" height="56.9" fill="#000" opacity="0.38" filter="url(#bs)"/><rect x="165.2" y="602.4" width="22" height="158.1" fill="#000" opacity="0.38" filter="url(#bs)"/><rect x="215.4" y="677.6" width="22" height="82.9" fill="#000" opacity="0.38" filter="url(#bs)"/><rect x="265.6" y="570.7" width="22" height="189.8" fill="#000" opacity="0.38" filter="url(#bs)"/><rect x="315.8" y="689.0" width="22" height="71.5" fill="#000" opacity="0.38" filter="url(#bs)"/><rect x="366.0" y="602.7" width="22" height="157.8" fill="#000" opacity="0.38" filter="url(#bs)"/><rect x="416.2" y="602.7" width="22" height="157.8" fill="#000" opacity="0.38" filter="url(#bs)"/><rect x="116.0" y="704.6" width="20" height="48.0" fill="url(#gg)"/><rect x="116.0" y="752.6" width="20" height="4.0" fill="url(#go)"/><rect x="116.0" y="756.6" width="20" height="4.4" fill="url(#gb)"/><rect x="166.2" y="603.4" width="20" height="69.5" fill="url(#gg)"/><rect x="166.2" y="672.9" width="20" height="58.1" fill="url(#go)"/><rect x="166.2" y="731.0" width="20" height="30.0" fill="url(#gb)"/><rect x="216.4" y="678.6" width="20" height="48.7" fill="url(#gg)"/><rect x="216.4" y="727.3" width="20" height="11.3" fill="url(#go)"/><rect x="216.4" y="738.6" width="20" height="22.4" fill="url(#gb)"/><rect x="266.6" y="571.7" width="20" height="68.7" fill="url(#gg)"/><rect x="266.6" y="640.4" width="20" height="43.7" fill="url(#go)"/><rect x="266.6" y="684.1" width="20" height="76.9" fill="url(#gb)"/><rect x="316.8" y="690.0" width="20" height="22.4" fill="url(#gg)"/><rect x="316.8" y="712.4" width="20" height="16.8" fill="url(#go)"/><rect x="316.8" y="729.2" width="20" height="31.8" fill="url(#gb)"/><rect x="367.0" y="603.7" width="20" height="61.4" fill="url(#gg)"/><rect x="367.0" y="665.1" width="20" height="39.9" fill="url(#go)"/><rect x="367.0" y="705.0" width="20" height="56.0" fill="url(#gb)"/><rect x="417.2" y="603.7" width="20" height="76.4" fill="url(#gg)"/><rect x="417.2" y="680.1" width="20" height="67.3" fill="url(#go)"/><rect x="417.2" y="747.4" width="20" height="13.6" fill="url(#gb)"/><rect x="473" y="651.6" width="7" height="6.800" fill="url(#gg)"/><rect x="473" y="674.1" width="7" height="6.800" fill="url(#go)"/><rect x="473" y="696.6" width="7" height="6.800" fill="url(#gb)"/></svg>
<span id="t112" class="m" style="position:absolute;white-space:nowrap;line-height:15px;height:15px;font-size:11.5px;color:#d9d9d9;top:752.5px;right:851.5px;transform-origin:100% 50%;">0</span>
<span id="t113" class="m" style="position:absolute;white-space:nowrap;line-height:15px;height:15px;font-size:11.5px;color:#d9d9d9;top:711.5px;right:851.5px;transform-origin:100% 50%;transform:scaleX(0.948);">5,000,000</span>
<span id="t114" class="m" style="position:absolute;white-space:nowrap;line-height:15px;height:15px;font-size:11.5px;color:#d9d9d9;top:670.1px;right:851.5px;transform-origin:100% 50%;transform:scaleX(0.955);">10,000,000</span>
<span id="t115" class="m" style="position:absolute;white-space:nowrap;line-height:15px;height:15px;font-size:11.5px;color:#d9d9d9;top:627.6px;right:851.5px;transform-origin:100% 50%;transform:scaleX(0.955);">15,000,000</span>
<span id="t116" class="m" style="position:absolute;white-space:nowrap;line-height:15px;height:15px;font-size:11.5px;color:#d9d9d9;top:587.1px;right:851.5px;transform-origin:100% 50%;transform:scaleX(0.955);">20,000,000</span>
<span id="t117" class="m" style="position:absolute;white-space:nowrap;line-height:15px;height:15px;font-size:11.5px;color:#d9d9d9;top:544.0px;right:851.5px;transform-origin:100% 50%;transform:scaleX(0.955);">25,000,000</span>
<span id="t118" class="m" style="position:absolute;white-space:nowrap;line-height:16px;height:16px;font-size:12px;color:#d9d9d9;top:771.0px;left:114.5px;transform-origin:0 50%;transform:scaleX(0.979);">近藤</span>
<span id="t119" class="m" style="position:absolute;white-space:nowrap;line-height:16px;height:16px;font-size:12px;color:#d9d9d9;top:771.0px;left:164.7px;transform-origin:0 50%;transform:scaleX(0.979);">佐藤</span>
<span id="t120" class="m" style="position:absolute;white-space:nowrap;line-height:16px;height:16px;font-size:12px;color:#d9d9d9;top:771.0px;left:214.9px;transform-origin:0 50%;transform:scaleX(0.979);">松尾</span>
<span id="t121" class="m" style="position:absolute;white-space:nowrap;line-height:16px;height:16px;font-size:12px;color:#d9d9d9;top:771.0px;left:265.1px;transform-origin:0 50%;transform:scaleX(0.979);">太田</span>
<span id="t122" class="m" style="position:absolute;white-space:nowrap;line-height:16px;height:16px;font-size:12px;color:#d9d9d9;top:771.0px;left:315.3px;transform-origin:0 50%;transform:scaleX(0.979);">渡辺</span>
<span id="t123" class="m" style="position:absolute;white-space:nowrap;line-height:16px;height:16px;font-size:12px;color:#d9d9d9;top:771.0px;left:365.5px;transform-origin:0 50%;transform:scaleX(0.979);">木村</span>
<span id="t124" class="m" style="position:absolute;white-space:nowrap;line-height:16px;height:16px;font-size:12px;color:#d9d9d9;top:771.0px;left:415.70000000000005px;transform-origin:0 50%;transform:scaleX(0.979);">鈴木</span>
<div style="position:absolute;left:34px;top:520px;width:82px;height:17px;background:linear-gradient(#f2f2f2,#d8d8d8 45%,#c4c4c4);border:1px solid #b5b5b5;"></div><span id="t125" class="m" style="position:absolute;white-space:nowrap;line-height:16px;height:16px;font-size:12.5px;color:#000;top:520.2px;left:38px;transform-origin:0 50%;transform:scaleX(0.86);">合計 / 売上実績</span>
<div style="position:absolute;left:467.5px;top:626px;width:43.5px;height:17px;background:linear-gradient(#f2f2f2,#d8d8d8 45%,#c4c4c4);border:1px solid #b5b5b5;"></div><span id="t126" class="m" style="position:absolute;white-space:nowrap;line-height:16px;height:16px;font-size:12px;color:#000;top:626.5px;left:471.5px;transform-origin:0 50%;transform:scaleX(0.979);">日付</span><svg style="position:absolute;left:500.0px;top:632.5px;" width="7" height="4" viewBox="0 0 7 4"><path d="M0 0 H7 L3.5 4 Z" fill="#333"/></svg>
<span id="t127" class="m" style="position:absolute;white-space:nowrap;line-height:16px;height:16px;font-size:12px;color:#d9d9d9;top:646.5px;left:483px;transform-origin:0 50%;transform:scaleX(0.856);">3月</span>
<span id="t128" class="m" style="position:absolute;white-space:nowrap;line-height:16px;height:16px;font-size:12px;color:#d9d9d9;top:669.5px;left:483px;transform-origin:0 50%;transform:scaleX(0.856);">2月</span>
<span id="t129" class="m" style="position:absolute;white-space:nowrap;line-height:16px;height:16px;font-size:12px;color:#d9d9d9;top:692.0px;left:483px;transform-origin:0 50%;transform:scaleX(0.856);">1月</span>
<div style="position:absolute;left:34px;top:798px;width:43px;height:17px;background:linear-gradient(#f2f2f2,#d8d8d8 45%,#c4c4c4);border:1px solid #b5b5b5;"></div><span id="t130" class="m" style="position:absolute;white-space:nowrap;line-height:16px;height:16px;font-size:12px;color:#000;top:798.5px;left:38px;transform-origin:0 50%;transform:scaleX(0.979);">担当</span><svg style="position:absolute;left:66px;top:804.5px;" width="7" height="4" viewBox="0 0 7 4"><path d="M0 0 H7 L3.5 4 Z" fill="#333"/></svg>
<div style="position:absolute;left:563px;top:416px;width:356.5px;height:312px;background:#404040;"></div>
<svg style="position:absolute;left:0px;top:0px;" width="939" height="845" viewBox="0 0 939 845"><rect x="616" y="640.0" width="256" height="1" fill="#4e4e4e"/><rect x="616" y="606.6" width="256" height="1" fill="#5a5a5a"/><rect x="616" y="573.2" width="256" height="1" fill="#5a5a5a"/><rect x="616" y="539.8" width="256" height="1" fill="#5a5a5a"/><rect x="616" y="506.4" width="256" height="1" fill="#5a5a5a"/><rect x="616" y="473.0" width="256" height="1" fill="#5a5a5a"/><defs><linearGradient id="vf" x1="0" y1="0" x2="0" y2="1"><stop offset="0" stop-color="#5a5a5a"/><stop offset="0.6" stop-color="#585858"/><stop offset="1" stop-color="#404040"/></linearGradient></defs><rect x="616.0" y="473" width="1" height="196" fill="url(#vf)"/><rect x="701.0" y="473" width="1" height="196" fill="url(#vf)"/><rect x="786.0" y="473" width="1" height="196" fill="url(#vf)"/><rect x="871.0" y="473" width="1" height="196" fill="url(#vf)"/><defs><filter id="gl" x="-30%" y="-30%" width="160%" height="160%"><feGaussianBlur stdDeviation="3.2"/></filter></defs><polyline points="658.5,564.7 743.5,610.1 828.5,561.7" fill="none" stroke="#d8d8d8" stroke-width="7" stroke-linejoin="round" stroke-linecap="round" opacity="0.33" filter="url(#gl)"/><polyline points="658.5,593.1 743.5,570.0 828.5,532.6" fill="none" stroke="#2f5fd8" stroke-width="9" stroke-linejoin="round" stroke-linecap="round" opacity="0.8" filter="url(#gl)"/><polyline points="658.5,549.7 743.5,557.7 828.5,506.6" fill="none" stroke="#f0701c" stroke-width="8" stroke-linejoin="round" stroke-linecap="round" opacity="0.6" filter="url(#gl)"/><polyline points="658.5,564.7 743.5,610.1 828.5,561.7" fill="none" stroke="#b4b4b4" stroke-width="2.3" stroke-linejoin="round" stroke-linecap="round"/><circle cx="658.5" cy="564.7" r="2.6" fill="#e0e0e0"/><circle cx="743.5" cy="610.1" r="2.6" fill="#e0e0e0"/><circle cx="828.5" cy="561.7" r="2.6" fill="#e0e0e0"/><polyline points="658.5,593.1 743.5,570.0 828.5,532.6" fill="none" stroke="#4472c4" stroke-width="2.3" stroke-linejoin="round" stroke-linecap="round"/><circle cx="658.5" cy="593.1" r="2.6" fill="#8faadc"/><circle cx="743.5" cy="570.0" r="2.6" fill="#8faadc"/><circle cx="828.5" cy="532.6" r="2.6" fill="#8faadc"/><polyline points="658.5,549.7 743.5,557.7 828.5,506.6" fill="none" stroke="#ed7d31" stroke-width="2.3" stroke-linejoin="round" stroke-linecap="round"/><circle cx="658.5" cy="549.7" r="2.6" fill="#f4b183"/><circle cx="743.5" cy="557.7" r="2.6" fill="#f4b183"/><circle cx="828.5" cy="506.6" r="2.6" fill="#f4b183"/><rect x="839" y="557.7" width="26.700" height="2.2" fill="#4472c4"/><circle cx="851.800" cy="558.8" r="2.5" fill="#8faadc"/><rect x="839" y="579.9" width="26.700" height="2.2" fill="#ed7d31"/><circle cx="851.800" cy="581" r="2.5" fill="#f4b183"/><rect x="839" y="602.7" width="26.700" height="2.2" fill="#b4b4b4"/><circle cx="851.800" cy="603.8" r="2.5" fill="#e0e0e0"/></svg>
<span id="t131" class="m" style="position:absolute;white-space:nowrap;line-height:15px;height:15px;font-size:11.3px;color:#c6c6c6;top:666.0px;right:332.70000000000005px;transform-origin:100% 50%;transform:scaleX(1.032);">0</span>
<span id="t132" class="m" style="position:absolute;white-space:nowrap;line-height:15px;height:15px;font-size:11.3px;color:#c6c6c6;top:632.6px;right:332.70000000000005px;transform-origin:100% 50%;">100</span>
<span id="t133" class="m" style="position:absolute;white-space:nowrap;line-height:15px;height:15px;font-size:11.3px;color:#c6c6c6;top:599.2px;right:332.70000000000005px;transform-origin:100% 50%;">200</span>
<span id="t134" class="m" style="position:absolute;white-space:nowrap;line-height:15px;height:15px;font-size:11.3px;color:#c6c6c6;top:565.8px;right:332.70000000000005px;transform-origin:100% 50%;">300</span>
<span id="t135" class="m" style="position:absolute;white-space:nowrap;line-height:15px;height:15px;font-size:11.3px;color:#c6c6c6;top:532.4px;right:332.70000000000005px;transform-origin:100% 50%;">400</span>
<span id="t136" class="m" style="position:absolute;white-space:nowrap;line-height:15px;height:15px;font-size:11.3px;color:#c6c6c6;top:499.1px;right:332.70000000000005px;transform-origin:100% 50%;">500</span>
<span id="t137" class="m" style="position:absolute;white-space:nowrap;line-height:15px;height:15px;font-size:11.3px;color:#c6c6c6;top:465.7px;right:332.70000000000005px;transform-origin:100% 50%;">600</span>
<span id="t138" class="m" style="position:absolute;white-space:nowrap;line-height:16px;height:16px;font-size:12px;color:#c8c8c8;top:684.0px;left:650.2px;transform-origin:0 50%;transform:scaleX(0.883);">1月</span>
<span id="t139" class="m" style="position:absolute;white-space:nowrap;line-height:16px;height:16px;font-size:12px;color:#c8c8c8;top:684.0px;left:735.2px;transform-origin:0 50%;transform:scaleX(0.883);">2月</span>
<span id="t140" class="m" style="position:absolute;white-space:nowrap;line-height:16px;height:16px;font-size:12px;color:#c8c8c8;top:684.0px;left:820.2px;transform-origin:0 50%;transform:scaleX(0.883);">3月</span>
<div style="position:absolute;left:573px;top:423px;width:72px;height:17px;background:linear-gradient(#f2f2f2,#d8d8d8 45%,#c4c4c4);border:1px solid #b5b5b5;"></div><span id="t141" class="m" style="position:absolute;white-space:nowrap;line-height:16px;height:16px;font-size:12.5px;color:#000;top:423.2px;left:577px;transform-origin:0 50%;transform:scaleX(0.868);">合計 / 契約数</span>
<div style="position:absolute;left:835px;top:529px;width:75px;height:17px;background:linear-gradient(#f2f2f2,#d8d8d8 45%,#c4c4c4);border:1px solid #b5b5b5;"></div><span id="t142" class="m" style="position:absolute;white-space:nowrap;line-height:16px;height:16px;font-size:12px;color:#000;top:529.5px;left:839px;transform-origin:0 50%;transform:scaleX(0.979);">店名</span><svg style="position:absolute;left:898px;top:535.5px;" width="7" height="4" viewBox="0 0 7 4"><path d="M0 0 H7 L3.5 4 Z" fill="#333"/></svg>
<span id="t143" class="m" style="position:absolute;white-space:nowrap;line-height:16px;height:16px;font-size:12px;color:#c8c8c8;top:550.0px;left:868.5px;transform-origin:0 50%;transform:scaleX(0.979);">大阪</span>
<span id="t144" class="m" style="position:absolute;white-space:nowrap;line-height:16px;height:16px;font-size:12px;color:#c8c8c8;top:572.5px;left:868.5px;transform-origin:0 50%;transform:scaleX(0.979);">東京</span>
<span id="t145" class="m" style="position:absolute;white-space:nowrap;line-height:16px;height:16px;font-size:12px;color:#c8c8c8;top:595.3px;left:868.5px;transform-origin:0 50%;transform:scaleX(0.972);">名古屋</span>
<div style="position:absolute;left:573px;top:702px;width:43px;height:17px;background:linear-gradient(#f2f2f2,#d8d8d8 45%,#c4c4c4);border:1px solid #b5b5b5;"></div><span id="t146" class="m" style="position:absolute;white-space:nowrap;line-height:16px;height:16px;font-size:12px;color:#000;top:702.5px;left:577px;transform-origin:0 50%;transform:scaleX(0.979);">日付</span><svg style="position:absolute;left:605px;top:708.5px;" width="7" height="4" viewBox="0 0 7 4"><path d="M0 0 H7 L3.5 4 Z" fill="#333"/></svg>
<div style="position:absolute;left:0px;top:123px;width:939px;height:53px;background:#e6e6e6;"></div>
<div style="position:absolute;left:0px;top:124px;width:939px;height:7px;background:linear-gradient(#d6d6d6,#e0e0e0 50%,#e6e6e6);"></div>
<div style="position:absolute;left:0px;top:0px;width:939px;height:124px;background:#f3f3f3;"></div>
<span id="t147" class="m" style="position:absolute;white-space:nowrap;line-height:17px;height:17px;font-size:13px;color:#3c3c3c;top:3.5px;left:8px;transform-origin:0 50%;transform:scaleX(0.731);">ファイル</span>
<span id="t148" class="m" style="position:absolute;white-space:nowrap;line-height:17px;height:17px;font-size:13px;color:#3c3c3c;top:3.5px;left:75px;transform-origin:0 50%;transform:scaleX(0.718);">タッチ</span>
<span id="t149" class="m" style="position:absolute;white-space:nowrap;line-height:17px;height:17px;font-size:13px;color:#3c3c3c;top:3.5px;left:130px;transform-origin:0 50%;transform:scaleX(0.846);">ホーム</span>
<span id="t150" class="m" style="position:absolute;white-space:nowrap;line-height:17px;height:17px;font-size:13px;color:#3c3c3c;top:3.5px;left:190px;transform-origin:0 50%;">挿入</span>
<span id="t151" class="m" style="position:absolute;white-space:nowrap;line-height:17px;height:17px;font-size:13px;color:#3c3c3c;top:3.5px;left:244px;transform-origin:0 50%;transform:scaleX(0.808);">ページ レイアウト</span>
<span id="t152" class="m" style="position:absolute;white-space:nowrap;line-height:17px;height:17px;font-size:13px;color:#3c3c3c;top:3.5px;left:359px;transform-origin:0 50%;transform:scaleX(1.038);">数式</span>
<span id="t153" class="m" style="position:absolute;white-space:nowrap;line-height:17px;height:17px;font-size:13px;color:#3c3c3c;top:3.5px;left:412px;transform-origin:0 50%;transform:scaleX(0.846);">データ</span>
<span id="t154" class="m" style="position:absolute;white-space:nowrap;line-height:17px;height:17px;font-size:13px;color:#3c3c3c;top:3.5px;left:472px;transform-origin:0 50%;transform:scaleX(0.962);">校閲</span>
<span id="t155" class="m" style="position:absolute;white-space:nowrap;line-height:17px;height:17px;font-size:13px;color:#3c3c3c;top:3.5px;left:525px;transform-origin:0 50%;">表示</span>
<span id="t156" class="m" style="position:absolute;white-space:nowrap;line-height:17px;height:17px;font-size:13px;color:#3c3c3c;top:3.5px;left:578px;transform-origin:0 50%;">開発</span>
<span id="t157" class="m" style="position:absolute;white-space:nowrap;line-height:17px;height:17px;font-size:13px;color:#3c3c3c;top:3.5px;left:631px;transform-origin:0 50%;transform:scaleX(0.821);">ヘルプ</span>
<span id="t158" class="m" style="position:absolute;white-space:nowrap;line-height:17px;height:17px;font-size:13px;color:#217346;top:3.5px;font-weight:bold;left:691px;transform-origin:0 50%;transform:scaleX(0.846);">ピボットテーブル分析</span>
<div style="position:absolute;left:691px;top:22px;width:110px;height:3px;background:#217346;"></div>
<span id="t159" class="m" style="position:absolute;white-space:nowrap;line-height:17px;height:17px;font-size:13px;color:#217346;top:3.5px;left:827px;transform-origin:0 50%;transform:scaleX(0.788);">デザイン</span>
<div style="position:absolute;left:101px;top:31px;width:1px;height:89px;background:#cdcdcd;"></div>
<div style="position:absolute;left:446px;top:31px;width:1px;height:89px;background:#cdcdcd;"></div>
<div style="position:absolute;left:594px;top:31px;width:1px;height:89px;background:#cdcdcd;"></div>
<div style="position:absolute;left:767px;top:31px;width:1px;height:89px;background:#cdcdcd;"></div>
<div style="position:absolute;left:890px;top:31px;width:1px;height:89px;background:#cdcdcd;"></div>
<span id="t160" class="m" style="position:absolute;white-space:nowrap;line-height:16px;height:16px;font-size:12px;color:#383838;top:107.0px;left:12px;transform-origin:0 50%;transform:scaleX(0.75);">ピボットテーブル</span>
<span id="t161" class="m" style="position:absolute;white-space:nowrap;line-height:16px;height:16px;font-size:12px;color:#383838;top:107.0px;left:226px;transform-origin:0 50%;transform:scaleX(0.72);">アクティブなフィールド</span>
<span id="t162" class="m" style="position:absolute;white-space:nowrap;line-height:16px;height:16px;font-size:12px;color:#383838;top:107.0px;left:501px;transform-origin:0 50%;transform:scaleX(0.792);">グループ</span>
<span id="t163" class="m" style="position:absolute;white-space:nowrap;line-height:16px;height:16px;font-size:12px;color:#383838;top:107.0px;left:659px;transform-origin:0 50%;transform:scaleX(0.7);">フィルター</span>
<span id="t164" class="m" style="position:absolute;white-space:nowrap;line-height:16px;height:16px;font-size:12px;color:#383838;top:107.0px;left:815px;transform-origin:0 50%;transform:scaleX(0.778);">データ</span>
<span id="t165" class="m" style="position:absolute;white-space:nowrap;line-height:16px;height:16px;font-size:12px;color:#383838;top:35.0px;left:3px;transform-origin:0 50%;transform:scaleX(0.799);">ピボットテーブル名:</span>
<div style="position:absolute;left:3px;top:56px;width:91px;height:21px;background:#fff;border:1px solid #b4b4b4;"></div>
<span id="t166" class="m" style="position:absolute;white-space:nowrap;line-height:16px;height:16px;font-size:12px;color:#222;top:58.5px;left:6px;transform-origin:0 50%;transform:scaleX(0.76);">ピボットテーブル1</span>
<svg style="position:absolute;left:6px;top:82px;" width="18" height="18" viewBox="0 0 18 18"><rect x="0.600" y="0.600" width="15.3" height="15.3" fill="#fbfbfb" stroke="#3b3b3b" stroke-width="1.2"/><rect x="2.7" y="2.7" width="1.800" height="1.800" fill="none" stroke="#8a8a8a" stroke-width="0.9"/><rect x="6.2" y="2.7" width="7.6" height="1.800" fill="none" stroke="#8a8a8a" stroke-width="0.9"/><rect x="2.7" y="6.2" width="1.800" height="7.6" fill="none" stroke="#8a8a8a" stroke-width="0.9"/><rect x="7.2" y="7.2" width="8.7" height="8.7" fill="#fff" stroke="#3b3b3b" stroke-width="1.2"/><rect x="8.800" y="8.800" width="2.2" height="2" fill="#2b7cd3"/><rect x="11.900" y="9.300" width="2.600" height="1" fill="#2b7cd3"/><rect x="8.800" y="12.2" width="2.2" height="2" fill="#2b7cd3"/><rect x="11.900" y="12.700" width="2.600" height="1" fill="#2b7cd3"/></svg>
<span id="t167" class="m" style="position:absolute;white-space:nowrap;line-height:16px;height:16px;font-size:12px;color:#383838;top:83.0px;left:25px;transform-origin:0 50%;transform:scaleX(0.717);">オプション</span>
<svg style="position:absolute;left:78px;top:89px;" width="7" height="5" viewBox="0 0 7 5"><path d="M0.7 0.7 L3.5 3.5 L6.3 0.7" fill="none" stroke="#444" stroke-width="1.2"/></svg>
<span id="t168" class="m" style="position:absolute;white-space:nowrap;line-height:16px;height:16px;font-size:12px;color:#383838;top:35.0px;left:110px;transform-origin:0 50%;transform:scaleX(0.731);">アクティブなフィールド:</span>
<div style="position:absolute;left:110px;top:56px;width:110px;height:21px;background:#fff;border:1px solid #b4b4b4;"></div>
<span id="t169" class="m" style="position:absolute;white-space:nowrap;line-height:16px;height:16px;font-size:12px;color:#222;top:58.5px;left:113px;transform-origin:0 50%;transform:scaleX(1.036);">合計 / 売上実績</span>
<svg style="position:absolute;left:113px;top:82px;" width="18" height="18" viewBox="0 0 18 18"><rect x="0.600" y="0.600" width="14.5" height="15.3" fill="#fbfbfb" stroke="#3b3b3b" stroke-width="1.2"/><rect x="2.7" y="2.7" width="1.800" height="1.800" fill="none" stroke="#8a8a8a" stroke-width="0.9"/><rect x="6.2" y="2.7" width="6.800" height="1.800" fill="none" stroke="#8a8a8a" stroke-width="0.9"/><rect x="2.7" y="6.2" width="1.800" height="7.6" fill="none" stroke="#8a8a8a" stroke-width="0.9"/><circle cx="11.5" cy="11.800" r="5.6" fill="#f3f3f3"/><rect x="-0.9" y="-4.700" width="1.800" height="2.2" fill="#2b7cd3" transform="translate(11.5 11.800) rotate(0)"/><rect x="-0.9" y="-4.700" width="1.800" height="2.2" fill="#2b7cd3" transform="translate(11.5 11.800) rotate(60)"/><rect x="-0.9" y="-4.700" width="1.800" height="2.2" fill="#2b7cd3" transform="translate(11.5 11.800) rotate(120)"/><rect x="-0.9" y="-4.700" width="1.800" height="2.2" fill="#2b7cd3" transform="translate(11.5 11.800) rotate(180)"/><rect x="-0.9" y="-4.700" width="1.800" height="2.2" fill="#2b7cd3" transform="translate(11.5 11.800) rotate(240)"/><rect x="-0.9" y="-4.700" width="1.800" height="2.2" fill="#2b7cd3" transform="translate(11.5 11.800) rotate(300)"/><circle cx="11.5" cy="11.800" r="2.7" fill="none" stroke="#2b7cd3" stroke-width="1.700"/></svg>
<span id="t170" class="m" style="position:absolute;white-space:nowrap;line-height:16px;height:16px;font-size:12px;color:#383838;top:83.0px;left:132px;transform-origin:0 50%;transform:scaleX(0.802);">フィールドの設定</span>
<svg style="position:absolute;left:227px;top:34px;" width="28" height="30" viewBox="0 0 28 30"><path d="M14 1 V27 M1.5 14.5 L14 27.5 L26.5 14.5" fill="none" stroke="#c2c2c2" stroke-width="1.3"/></svg>
<span id="t171" class="m" style="position:absolute;white-space:nowrap;line-height:16px;height:16px;font-size:12px;color:#aaaaaa;top:68.0px;left:228px;transform-origin:0 50%;transform:scaleX(0.694);">ドリル</span>
<span id="t172" class="m" style="position:absolute;white-space:nowrap;line-height:16px;height:16px;font-size:12px;color:#aaaaaa;top:83.0px;left:227px;transform-origin:0 50%;transform:scaleX(0.75);">ダウン</span>
<svg style="position:absolute;left:270px;top:34px;" width="28" height="30" viewBox="0 0 28 30"><path d="M14 29 V3 M1.5 15.5 L14 2.5 L26.5 15.5" fill="none" stroke="#c2c2c2" stroke-width="1.3"/></svg>
<span id="t173" class="m" style="position:absolute;white-space:nowrap;line-height:16px;height:16px;font-size:12px;color:#aaaaaa;top:68.0px;left:265px;transform-origin:0 50%;transform:scaleX(0.65);">ドリルアッ</span>
<span id="t174" class="m" style="position:absolute;white-space:nowrap;line-height:16px;height:16px;font-size:12px;color:#aaaaaa;top:83.0px;left:275px;transform-origin:0 50%;transform:scaleX(0.75);">プ</span>
<svg style="position:absolute;left:287px;top:89px;" width="7" height="5" viewBox="0 0 7 5"><path d="M0.7 0.7 L3.5 3.5 L6.3 0.7" fill="none" stroke="#aaaaaa" stroke-width="1.2"/></svg>
<svg style="position:absolute;left:312px;top:44px;" width="15" height="14" viewBox="0 0 15 14"><path d="M5 3.5 H13 M7 7 H13 M7 10.5 H13" stroke="#b5b5b5" stroke-width="1.1" fill="none"/><path d="M0 3.5 H4 M2 1.5 V5.5" stroke="#b5b5b5" stroke-width="1" fill="none"/></svg>
<span id="t175" class="m" style="position:absolute;white-space:nowrap;line-height:16px;height:16px;font-size:12px;color:#aaaaaa;top:43.0px;left:330px;transform-origin:0 50%;transform:scaleX(0.792);">フィールドの展開</span>
<svg style="position:absolute;left:312px;top:77px;" width="15" height="14" viewBox="0 0 15 14"><path d="M5 3.5 H13 M7 7 H13 M7 10.5 H13" stroke="#b5b5b5" stroke-width="1.1" fill="none"/><path d="M0 3.5 H4" stroke="#b5b5b5" stroke-width="1" fill="none"/></svg>
<span id="t176" class="m" style="position:absolute;white-space:nowrap;line-height:16px;height:16px;font-size:12px;color:#aaaaaa;top:76.0px;left:330px;transform-origin:0 50%;transform:scaleX(0.773);">フィールドの折りたたみ</span>
<svg style="position:absolute;left:457px;top:35px;" width="18" height="12" viewBox="0 0 18 12"><path d="M1 6 H16 M11 1.5 L16 6 L11 10.5" fill="none" stroke="#a6a6a6" stroke-width="1.2"/></svg>
<span id="t177" class="m" style="position:absolute;white-space:nowrap;line-height:16px;height:16px;font-size:12px;color:#aaaaaa;top:34.5px;left:477px;transform-origin:0 50%;transform:scaleX(0.857);">グループの選択</span>
<svg style="position:absolute;left:457px;top:56px;" width="18" height="16" viewBox="0 0 18 16"><rect x="1.5" y="4.5" width="5" height="6" fill="none" stroke="#a6a6a6"/><path d="M4 2 V13" stroke="#a6a6a6"/><rect x="9.5" y="1.5" width="6" height="13" fill="none" stroke="#a6a6a6"/><path d="M9.5 6 H15.5 M9.5 10 H15.5" stroke="#a6a6a6"/></svg>
<span id="t178" class="m" style="position:absolute;white-space:nowrap;line-height:16px;height:16px;font-size:12px;color:#aaaaaa;top:57.0px;left:477px;transform-origin:0 50%;transform:scaleX(0.861);">グループ解除</span>
<svg style="position:absolute;left:457px;top:78px;" width="18" height="17" viewBox="0 0 18 17"><rect x="1.5" y="3.5" width="14" height="12" fill="none" stroke="#a6a6a6"/><path d="M1.5 6.5 H15.5 M5 1 V4 M12 1 V4" stroke="#a6a6a6" fill="none"/><path d="M6 8.5 H11 L8 14" stroke="#a6a6a6" fill="none" stroke-width="1.1"/></svg>
<span id="t179" class="m" style="position:absolute;white-space:nowrap;line-height:16px;height:16px;font-size:12px;color:#aaaaaa;top:80.0px;left:477px;transform-origin:0 50%;transform:scaleX(0.78);">フィールドのグループ化</span>
<div style="position:absolute;left:603px;top:32px;width:50px;height:70px;background:#d6d6d6;"></div>
<svg style="position:absolute;left:612px;top:33px;" width="36" height="34" viewBox="0 0 36 34"><rect x="2.5" y="2.5" width="27" height="27" fill="#fff" stroke="#3b3b3b" stroke-width="1.2"/><rect x="3" y="3" width="26" height="3.5" fill="#9d9d9d"/><rect x="6.5" y="9.5" width="19" height="6" fill="#5ba4e6" stroke="#1f6fc0"/><rect x="6.5" y="19.5" width="12" height="4.5" fill="#a0a0a0"/><path d="M17.5 17.5 h16 v3 l-6 5 v6 h-4 v-6 l-6 -5 z" fill="#fff" stroke="#3b3b3b" stroke-width="1.2" stroke-linejoin="miter"/></svg>
<span id="t180" class="m" style="position:absolute;white-space:nowrap;line-height:16px;height:16px;font-size:12px;color:#383838;top:68.0px;left:604px;transform-origin:0 50%;transform:scaleX(0.8);">スライサー</span>
<span id="t181" class="m" style="position:absolute;white-space:nowrap;line-height:16px;height:16px;font-size:12px;color:#383838;top:83.0px;left:612px;transform-origin:0 50%;transform:scaleX(0.917);">の挿入</span>
<svg style="position:absolute;left:666px;top:38px;" width="38" height="30" viewBox="0 0 38 30"><rect x="3.5" y="2.5" width="27" height="16" fill="#fff" stroke="#3b3b3b" stroke-width="1.2"/><rect x="4" y="3" width="26" height="3.5" fill="#9d9d9d"/><rect x="7" y="10" width="5" height="4.5" fill="#d0d0d0" stroke="#555"/><rect x="14" y="10" width="5" height="4.5" fill="#d0d0d0" stroke="#555"/><path d="M18.5 12.5 h16 v3 l-6 5 v6 h-4 v-6 l-6 -5 z" fill="#fff" stroke="#3b3b3b" stroke-width="1.2" stroke-linejoin="miter"/></svg>
<span id="t182" class="m" style="position:absolute;white-space:nowrap;line-height:16px;height:16px;font-size:12px;color:#383838;top:68.0px;left:656px;transform-origin:0 50%;transform:scaleX(0.736);">タイムライン</span>
<span id="t183" class="m" style="position:absolute;white-space:nowrap;line-height:16px;height:16px;font-size:12px;color:#383838;top:83.0px;left:666px;transform-origin:0 50%;transform:scaleX(0.944);">の挿入</span>
<svg style="position:absolute;left:720px;top:33px;" width="36" height="34" viewBox="0 0 36 34"><rect x="2.5" y="5.5" width="13" height="17" fill="none" stroke="#bdbdbd"/><path d="M5 9 H7 M9 9 H14 M5 13 V20" stroke="#bdbdbd" stroke-width="1.6"/><path d="M19 4.5 L22.5 1.5 M19 4.5 L22.5 7.5 M19 4.5 C27 3 31 8 30 14" fill="none" stroke="#bdbdbd"/><rect x="12.5" y="13.5" width="16" height="15" fill="#f3f3f3" stroke="#bdbdbd"/><path d="M15 17 H26 M15 20.5 H20" stroke="#bdbdbd" stroke-width="1.6"/><path d="M20.5 19.5 h11 v2 l-4 3.5 v5 h-3 v-5 l-4 -3.5 z" fill="#f3f3f3" stroke="#bdbdbd"/></svg>
<span id="t184" class="m" style="position:absolute;white-space:nowrap;line-height:16px;height:16px;font-size:12px;color:#aaaaaa;top:68.0px;left:714px;transform-origin:0 50%;transform:scaleX(0.717);">フィルター</span>
<span id="t185" class="m" style="position:absolute;white-space:nowrap;line-height:16px;height:16px;font-size:12px;color:#aaaaaa;top:83.0px;left:720px;transform-origin:0 50%;transform:scaleX(0.917);">の接続</span>
<svg style="position:absolute;left:784px;top:33px;" width="34" height="34" viewBox="0 0 34 34"><path d="M2.5 2.5 h13 l7.5 7.5 v19 h-20.5 z" fill="#fbfbfb" stroke="#3b3b3b" stroke-width="1.2"/><path d="M15.5 2.5 v7.5 h7.5" fill="none" stroke="#3b3b3b" stroke-width="1.2"/><circle cx="21.6" cy="24.7" r="9.3" fill="#f3f3f3"/><path d="M14.8 23.5 A7 7 0 0 1 27.6 21.2 M28.4 25.9 A7 7 0 0 1 15.6 28.2" fill="none" stroke="#33a35c" stroke-width="1.5"/><path d="M28.2 16.6 V21.6 H23.2 M15 32.8 V27.800 H20" fill="none" stroke="#33a35c" stroke-width="1.4"/></svg>
<span id="t186" class="m" style="position:absolute;white-space:nowrap;line-height:16px;height:16px;font-size:12px;color:#383838;top:68.0px;left:785px;transform-origin:0 50%;">更新</span>
<svg style="position:absolute;left:793px;top:89px;" width="7" height="5" viewBox="0 0 7 5"><path d="M0.7 0.7 L3.5 3.5 L6.3 0.7" fill="none" stroke="#444" stroke-width="1.2"/></svg>
<svg style="position:absolute;left:836px;top:33px;" width="34" height="34" viewBox="0 0 34 34"><path d="M3 2.5 h13 l7.5 7.5 v19 h-20.5 z" fill="#fbfbfb" stroke="#3b3b3b" stroke-width="1.2"/><path d="M16 2.5 v7.5 h7.5" fill="none" stroke="#3b3b3b" stroke-width="1.2"/><rect x="14.5" y="16.5" width="15.5" height="15" fill="#fbfbfb" stroke="#3b3b3b" stroke-width="1.2"/><rect x="16.800" y="18.5" width="3" height="2.800" fill="#a3a3a3"/><rect x="21.2" y="18.5" width="7" height="2.5" fill="#a3a3a3"/><rect x="16.800" y="22.800" width="2.5" height="7" fill="#a3a3a3"/><path d="M27 23.5 V28.5 H22 M23.8 26.700 L22 28.5 L23.8 30.300 M25.2 25.300 L27 23.5 L28.800 25.300" fill="none" stroke="#2b7cd3" stroke-width="1.1"/></svg>
<span id="t187" class="m" style="position:absolute;white-space:nowrap;line-height:16px;height:16px;font-size:12px;color:#383838;top:68.0px;left:819px;transform-origin:0 50%;transform:scaleX(0.81);">データ ソース</span>
<span id="t188" class="m" style="position:absolute;white-space:nowrap;line-height:16px;height:16px;font-size:12px;color:#383838;top:83.0px;left:827px;transform-origin:0 50%;transform:scaleX(0.944);">の変更</span>
<svg style="position:absolute;left:866px;top:89px;" width="7" height="5" viewBox="0 0 7 5"><path d="M0.7 0.7 L3.5 3.5 L6.3 0.7" fill="none" stroke="#444" stroke-width="1.2"/></svg>
<svg style="position:absolute;left:904px;top:33px;" width="36" height="34" viewBox="0 0 36 34"><rect x="2.5" y="2.5" width="27.5" height="26.500" fill="#fbfbfb" stroke="#3b3b3b" stroke-width="1.2"/><rect x="5.5" y="5.5" width="5" height="5" fill="#a6a6a6"/><rect x="13.5" y="5.5" width="13" height="5" fill="#a6a6a6"/><rect x="5.5" y="13.5" width="5" height="13" fill="#a6a6a6"/><path d="M24.5 13.5 L31.2 21.200 L19.5 31.500 L13.2 24 Z" fill="#fbfbfb" stroke="#a846b8" stroke-width="1.2" stroke-linejoin="round"/><path d="M17.800 19.800 L24.3 27.300 L19.5 31.500 L13.2 24 Z" fill="#c986d6" stroke="#a846b8" stroke-width="1.2" stroke-linejoin="round"/></svg>
<span id="t189" class="m" style="position:absolute;white-space:nowrap;line-height:16px;height:16px;font-size:12px;color:#383838;top:68.0px;left:908px;transform-origin:0 50%;transform:scaleX(0.667);">クリア</span>
<svg style="position:absolute;left:918px;top:89px;" width="7" height="5" viewBox="0 0 7 5"><path d="M0.7 0.7 L3.5 3.5 L6.3 0.7" fill="none" stroke="#444" stroke-width="1.2"/></svg>
<div style="position:absolute;left:-1px;top:135px;width:103px;height:31px;background:#fff;border:1px solid #c8c8c8;"></div>
<span id="t190" class="m" style="position:absolute;white-space:nowrap;line-height:19px;height:19px;font-size:15.5px;color:#444;top:142.8px;left:7.5px;transform-origin:0 50%;transform:scaleX(0.975);">A3</span>
<svg style="position:absolute;left:84px;top:148px;" width="8" height="5" viewBox="0 0 8 5"><path d="M0 0 H7.5 L3.75 4 Z" fill="#777"/></svg>
<div style="position:absolute;left:116px;top:145px;width:2px;height:2px;background:#a8a8a8;"></div>
<div style="position:absolute;left:116px;top:149px;width:2px;height:2px;background:#a8a8a8;"></div>
<div style="position:absolute;left:116px;top:153px;width:2px;height:2px;background:#a8a8a8;"></div>
<div style="position:absolute;left:132px;top:135px;width:110px;height:31px;background:#fff;border:1px solid #c8c8c8;"></div>
<svg style="position:absolute;left:145px;top:144px;" width="12" height="12" viewBox="0 0 12 12"><path d="M1.5 1.5 L10.5 10.5 M10.5 1.5 L1.5 10.5" stroke="#c0c0c0" stroke-width="1.4" fill="none"/></svg>
<svg style="position:absolute;left:178px;top:144px;" width="14" height="12" viewBox="0 0 14 12"><path d="M1.5 6.5 L5 10 L12.5 1.5" stroke="#b8b8b8" stroke-width="2.1" fill="none"/></svg>
<span id="t191" style="position:absolute;white-space:nowrap;line-height:18px;height:18px;font-size:14px;color:#333;top:141.0px;font-weight:bold;font-family:'Liberation Serif',serif;left:217.5px;transform-origin:0 50%;font-style:italic;">f</span>
<span id="t192" style="position:absolute;white-space:nowrap;line-height:13px;height:13px;font-size:9.5px;color:#333;top:145.8px;font-weight:bold;font-family:'Liberation Serif',serif;left:222px;transform-origin:0 50%;font-style:italic;">x</span>
<div style="position:absolute;left:246px;top:135px;width:695px;height:31px;background:#fff;border:1px solid #c8c8c8;"></div>
<span id="t193" class="m" style="position:absolute;white-space:nowrap;line-height:19px;height:19px;font-size:15px;color:#444;top:140.0px;left:259px;transform-origin:0 50%;">合計 / 売上実績</span>
<div style="position:absolute;left:603px;top:125px;width:198px;height:143.5px;background:#fff;border:1px solid #bebebe;box-shadow:0 1px 4px rgba(0,0,0,0.2);"></div>
<span id="t194" class="m" style="position:absolute;white-space:nowrap;line-height:16px;height:16px;font-size:12px;color:#444;top:131.8px;font-weight:bold;left:615px;transform-origin:0 50%;transform:scaleX(0.875);">スライサーの挿入</span>
<span id="t195" class="m" style="position:absolute;white-space:nowrap;line-height:16px;height:16px;font-size:12px;color:#4a4a4a;top:152.9px;left:615px;transform-origin:0 50%;transform:scaleX(0.754);">スライサーを使って、データのフィルター</span>
<span id="t196" class="m" style="position:absolute;white-space:nowrap;line-height:16px;height:16px;font-size:12px;color:#4a4a4a;top:167.4px;left:615px;transform-origin:0 50%;transform:scaleX(0.865);">処理を視覚的に実行します。</span>
<span id="t197" class="m" style="position:absolute;white-space:nowrap;line-height:16px;height:16px;font-size:12px;color:#4a4a4a;top:197.9px;left:615px;transform-origin:0 50%;transform:scaleX(0.759);">スライサーを使うと、テーブルやピボット</span>
<span id="t198" class="m" style="position:absolute;white-space:nowrap;line-height:16px;height:16px;font-size:12px;color:#4a4a4a;top:212.4px;left:615px;transform-origin:0 50%;transform:scaleX(0.759);">テーブル、ピボットグラフ、キューブ関数</span>
<span id="t199" class="m" style="position:absolute;white-space:nowrap;line-height:16px;height:16px;font-size:12px;color:#4a4a4a;top:226.9px;left:615px;transform-origin:0 50%;transform:scaleX(0.801);">のフィルター処理が速くなり、簡単にな</span>
<span id="t200" class="m" style="position:absolute;white-space:nowrap;line-height:16px;height:16px;font-size:12px;color:#4a4a4a;top:241.4px;left:615px;transform-origin:0 50%;transform:scaleX(0.646);">ります。</span>
<div style="position:absolute;left:14px;top:237px;width:139px;height:46.5px;border:5px solid #ec1c24;"></div>
<div style="position:absolute;left:598px;top:27px;width:60px;height:80px;border:5px solid #ec1c24;"></div>
<div style="position:absolute;left:681px;top:-5px;width:129px;height:36px;border:5px solid #ec1c24;"></div>
</body></html>
